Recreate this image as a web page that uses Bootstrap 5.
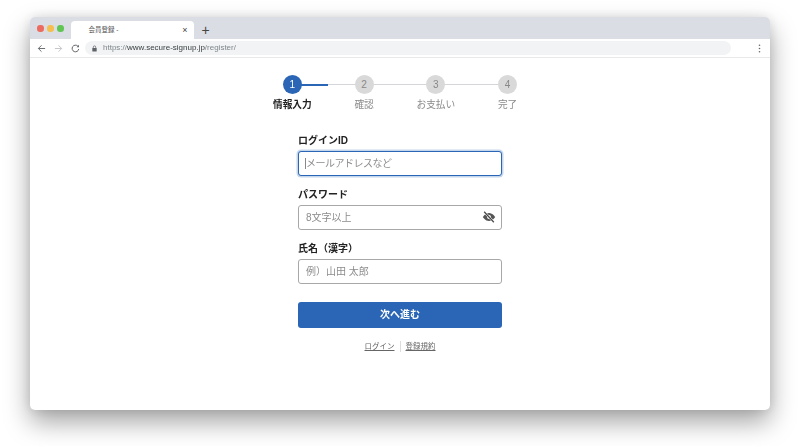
<!DOCTYPE html>
<html lang="ja">
<head>
<meta charset="utf-8">
<title>会員登録</title>
<link href="https://cdn.jsdelivr.net/npm/bootstrap@5.3.0/dist/css/bootstrap.min.css" rel="stylesheet">
<style>
html,body{height:100%;}
body{background:#fff;font-family:"Liberation Sans","Noto Sans CJK JP",sans-serif;color:#222;padding:17px 30px 36px;overflow:hidden;}
.mac-window{height:393px;background:#fff;border-radius:5px;overflow:hidden;box-shadow:0 12px 26px rgba(0,0,0,.36),0 0 12px rgba(0,0,0,.1);filter:blur(.3px);}
.tab-strip{height:22px;background:#dadde3;padding-left:7px;}
.light-group{gap:3.5px;margin-top:8px;}
.traffic{width:6.5px;height:6.5px;border-radius:50%;}
.tab-page{width:123px;height:18px;margin:4px 0 0 7px;background:#fff;border-radius:4px 4px 0 0;padding:0 6px 0 18px;font-size:6.5px;color:#555;}
.tab-close{font-size:9px;color:#444;line-height:1;}
.tab-plus{font-size:14px;color:#444;line-height:1;margin:6px 0 0 8px;font-weight:400;}
.tool-row{height:19px;background:#fff;border-bottom:1px solid #e8e9eb;padding:0 9px 0 7px;}
.url-field{width:646px;height:14px;background:#f1f3f4;border-radius:7px;padding-left:6px;margin-left:5px;font-size:8px;color:#80868b;}
.url-field b{font-weight:400;color:#3c4043;}
.url-text{margin-left:1px;}
.step-row{width:287px;margin:17px auto 0;}
.step-item{flex:1 1 0;position:relative;font-size:9.7px;color:#8a8a8a;text-align:center;}
.step-item::after{content:"";position:absolute;left:50%;top:9px;width:100%;height:1px;background:#d4d6d9;}
.step-item:last-child::after{display:none;}
.step-item.is-on{color:#222;font-weight:700;}
.step-item.is-on::before{content:"";position:absolute;left:50%;top:8.5px;width:36px;height:2px;background:#2a66b5;z-index:2;}
.step-dot{position:relative;z-index:1;width:19px;height:19px;line-height:19px;border-radius:50%;background:#d9d9d9;color:#888;font-size:10px;font-weight:400;margin:0 auto 4px;}
.is-on .step-dot{background:#2a66b5;color:#fff;z-index:3;}
.step-text{line-height:13px;}
.form-box{width:204px;margin:23px auto 0;}
.field-label{font-size:10px;font-weight:700;line-height:14px;margin:0 0 2.5px;color:#222;}
.field-wrap{margin-bottom:12.5px;position:relative;}
.form-control.signup-input{height:25px;font-size:10px;padding:0 7px;border:1px solid #a8a8a8;border-radius:3px;color:#222;min-height:0;box-shadow:none;}
.form-control.signup-input::placeholder{color:#8c8c8c;opacity:1;}
.form-control.signup-input.is-focused{border:1.5px solid #2a66b5;box-shadow:0 0 0 1.5px #c4d6ec;letter-spacing:-.5px;}
.caret-mark{position:absolute;left:7px;bottom:7px;width:1px;height:11px;background:#888;}
.eye-icon{position:absolute;right:6.5px;bottom:5.5px;width:14px;height:14px;}
.btn.submit-btn{height:26px;width:100%;margin-top:5.5px;padding:0;background:#2a66b5;border:0;border-radius:3px;color:#fff;font-size:10px;font-weight:700;}
.link-row{margin-top:13px;font-size:7.5px;line-height:11px;}
.link-row a{color:#666;padding:0 5px;}
.link-row a+a{border-left:1px solid #ddd;}
</style>
</head>
<body>
<div class="mac-window d-flex flex-column">
  <div class="tab-strip d-flex align-items-start">
    <div class="light-group d-flex align-items-center">
      <span class="traffic" style="background:#ec6a5e"></span>
      <span class="traffic" style="background:#f4bf4f"></span>
      <span class="traffic" style="background:#61c554"></span>
    </div>
    <div class="tab-page d-flex align-items-center justify-content-between">
      <span>会員登録 -</span><span class="tab-close">×</span>
    </div>
    <span class="tab-plus">+</span>
  </div>
  <div class="tool-row d-flex align-items-center">
    <svg width="9" height="9" viewBox="0 0 10 10" fill="none" stroke="#6b6f74" stroke-width="1.1"><path d="M9 5H1.5M5 1.5 1.5 5 5 8.5"/></svg>
    <svg class="ms-2" width="9" height="9" viewBox="0 0 10 10" fill="none" stroke="#c4c6c9" stroke-width="1.1"><path d="M1 5h7.5M5 1.5 8.5 5 5 8.5"/></svg>
    <svg class="ms-2" width="9" height="9" viewBox="0 0 10 10" fill="none" stroke="#5f6368" stroke-width="1.1"><path d="M8.6 5.6A3.7 3.7 0 1 1 7.6 2.4"/><path d="M8.8.9v2.6H6.2" fill="#5f6368" stroke="none"/></svg>
    <div class="url-field d-flex align-items-center">
      <svg class="me-1" width="7" height="7" viewBox="0 0 8 8"><rect x="1.5" y="3.5" width="5" height="4" rx=".6" fill="#5f6368"/><path d="M2.6 3.5V2.4a1.4 1.4 0 0 1 2.8 0v1.1" fill="none" stroke="#5f6368" stroke-width=".8"/></svg>
      <span class="url-text">https://<b>www.secure-signup.jp</b>/register/</span>
    </div>
    <svg class="ms-auto" width="3" height="9" viewBox="0 0 3 9" fill="#666"><circle cx="1.5" cy="1.3" r=".8"/><circle cx="1.5" cy="4.5" r=".8"/><circle cx="1.5" cy="7.7" r=".8"/></svg>
  </div>
  <main class="flex-grow-1">
    <div class="step-row d-flex">
      <div class="step-item is-on"><div class="step-dot">1</div><div class="step-text">情報入力</div></div>
      <div class="step-item"><div class="step-dot">2</div><div class="step-text">確認</div></div>
      <div class="step-item"><div class="step-dot">3</div><div class="step-text">お支払い</div></div>
      <div class="step-item"><div class="step-dot">4</div><div class="step-text">完了</div></div>
    </div>
    <form class="form-box">
      <div class="field-wrap">
        <label class="field-label d-block">ログインID</label>
        <input class="form-control signup-input is-focused" placeholder="メールアドレスなど">
        <span class="caret-mark"></span>
      </div>
      <div class="field-wrap">
        <label class="field-label d-block">パスワード</label>
        <input class="form-control signup-input" placeholder="8文字以上">
        <svg class="eye-icon" viewBox="0 0 16 16" fill="none"><path d="M1 8s2.6-4.6 7-4.6S15 8 15 8s-2.6 4.6-7 4.6S1 8 1 8Z" fill="#555"/><circle cx="8" cy="8" r="2.2" fill="#fff"/><path d="M2.5 2 13.5 14" stroke="#fff" stroke-width="2.6"/><path d="M2.5 2 13.5 14" stroke="#444" stroke-width="1.3"/></svg>
      </div>
      <div class="field-wrap">
        <label class="field-label d-block">氏名（漢字）</label>
        <input class="form-control signup-input" placeholder="例）山田 太郎">
      </div>
      <button type="button" class="btn submit-btn">次へ進む</button>
      <div class="link-row d-flex justify-content-center">
        <a href="#">ログイン</a><a href="#">登録規約</a>
      </div>
    </form>
  </main>
</div>
<script src="https://cdn.jsdelivr.net/npm/bootstrap@5.3.0/dist/js/bootstrap.bundle.min.js"></script>
</body>
</html>
